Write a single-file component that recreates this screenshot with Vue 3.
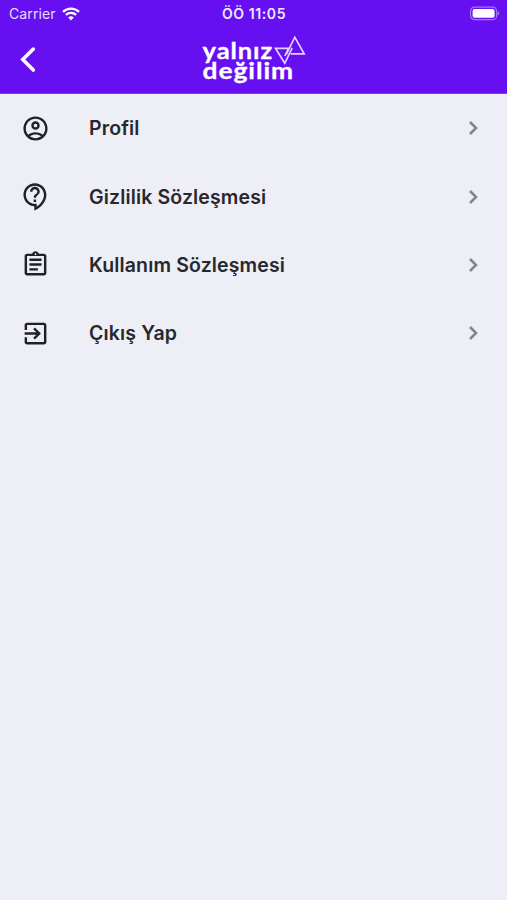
<template>
  <div class="screen">
    <header class="header">
      <div class="status-bar">
        <div class="carrier">
          <span>Carrier</span>
          <svg class="wifi" width="18" height="14" viewBox="0 0 18 14">
            <path d="M1 4.9a11.4 11.4 0 0 1 16 0" />
            <path d="M3.9 7.9a7.3 7.3 0 0 1 10.2 0" />
            <path class="wifi-dot" d="M9 13.4 6.2 10.6a4 4 0 0 1 5.6 0z" />
          </svg>
        </div>
        <div class="clock">ÖÖ 11:05</div>
        <svg class="battery" width="32" height="16" viewBox="0 0 32 16">
          <rect class="battery-frame" x="2.6" y="1.1" width="26" height="12.6" rx="4" />
          <rect x="4.6" y="3" width="22" height="8.8" rx="2" fill="#fff" />
          <path d="M29.8 5.3c1.6.5 1.6 3.7 0 4.2z" fill="#b58bf8" />
        </svg>
      </div>

      <div class="nav-bar">
        <button class="back" aria-label="Geri">
          <svg width="20" height="28" viewBox="0 0 20 28">
            <path d="M16.3 3.1 5.8 13.6l10.5 10.5" />
          </svg>
        </button>
        <svg class="logo" width="108" height="56" viewBox="0 0 108 56">
          <text x="2.6" y="26.8" textLength="70.5" lengthAdjust="spacingAndGlyphs">yalnız</text>
          <text x="2.6" y="47.4" textLength="91.5" lengthAdjust="spacingAndGlyphs">değilim</text>
          <path d="M86.3 22.3 94.8 5.2l9.4 16.6H90.8M92.2 15.8 84.8 31.3 75.5 16.4h13l-3.6 7.6" />
        </svg>
      </div>
    </header>

    <ul class="menu">
      <li v-for="item in items" :key="item.title" class="menu-item">
        <svg class="menu-icon" width="29" height="29" viewBox="0 0 24 24">
          <path :d="item.icon" />
        </svg>
        <span class="menu-title">{{ item.title }}</span>
        <svg class="chevron" width="12" height="16" viewBox="0 0 12 16">
          <path d="m2 2 6 6-6 6" />
        </svg>
      </li>
    </ul>
  </div>
</template>

<script setup>
const items = [
  {
    title: 'Profil',
    icon: 'M12 2C6.48 2 2 6.48 2 12s4.48 10 10 10 10-4.48 10-10S17.52 2 12 2zM7.35 18.5C8.66 17.56 10.26 17 12 17s3.34.56 4.65 1.5C15.34 19.44 13.74 20 12 20s-3.34-.56-4.65-1.5zm10.79-1.38C16.45 15.8 14.32 15 12 15s-4.45.8-6.14 2.12C4.7 15.73 4 13.95 4 12c0-4.42 3.58-8 8-8s8 3.58 8 8c0 1.95-.7 3.73-1.86 5.12zM12 6c-1.93 0-3.5 1.57-3.5 3.5S10.07 13 12 13s3.5-1.57 3.5-3.5S13.93 6 12 6zm0 5c-.83 0-1.5-.67-1.5-1.5S11.17 8 12 8s1.5.67 1.5 1.5S12.83 11 12 11z'
  },
  {
    title: 'Gizlilik Sözleşmesi',
    icon: 'M11 23.59v-3.6c-5.01-.26-9-4.42-9-9.49C2 5.26 6.26 1 11.5 1S21 5.26 21 10.5c0 4.95-3.44 9.93-8.57 12.4l-1.43.69zM11.5 3C7.36 3 4 6.36 4 10.5S7.36 18 11.5 18H13v2.3c3.64-2.3 6-6.08 6-9.8C19 6.36 15.64 3 11.5 3zm-1 11.5h2v2h-2zm2-1.5h-2c0-3.25 3-3 3-5 0-1.1-.9-2-2-2s-2 .9-2 2h-2c0-2.21 1.79-4 4-4s4 1.79 4 4c0 2.5-3 2.75-3 5z'
  },
  {
    title: 'Kullanım Sözleşmesi',
    icon: 'M7 15h7v2H7zm0-4h10v2H7zm0-4h10v2H7zm12-4h-4.18C14.4 1.84 13.3 1 12 1s-2.4.84-2.82 2H5c-1.1 0-2 .9-2 2v14c0 1.1.9 2 2 2h14c1.1 0 2-.9 2-2V5c0-1.1-.9-2-2-2zm-7-.25c.41 0 .75.34.75.75s-.34.75-.75.75-.75-.34-.75-.75.34-.75.75-.75zM19 19H5V5h14v14z'
  },
  {
    title: 'Çıkış Yap',
    icon: 'M10.09 15.59 11.5 17l5-5-5-5-1.41 1.41L12.67 11H3v2h9.67l-2.58 2.59zM19 3H5c-1.11 0-2 .9-2 2v4h2V5h14v14H5v-4H3v4c0 1.1.89 2 2 2h14c1.1 0 2-.9 2-2V5c0-1.1-.9-2-2-2z'
  }
]
</script>

<style>
body {
  background: #edeef6;
}
</style>

<style scoped>
.screen {
  min-height: 900px;
  background: #edeef6;
  font-family: Inter, "Liberation Sans", sans-serif;
}

.header {
  box-sizing: border-box;
  height: 94px;
  color: #fff;
  background: #6610f2;
  border-bottom: 1px solid #7d3bef;
}

.status-bar {
  display: grid;
  grid-template-columns: 1fr auto 1fr;
  align-items: center;
  height: 27px;
  padding: 0 7px 0 9px;
}

.carrier {
  display: flex;
  align-items: center;
  gap: 6px;
  font-size: 14px;
  letter-spacing: 0.1px;
  color: #e9dcff;
}

.wifi {
  fill: none;
  stroke: #fff;
  stroke-width: 2.2;
}

.wifi .wifi-dot {
  fill: #fff;
  stroke: none;
}

.clock {
  margin-left: -1px;
  font-size: 14px;
  font-weight: 600;
  letter-spacing: 0.6px;
  color: #f0e7ff;
}

.battery {
  justify-self: end;
}

.battery-frame {
  fill: none;
  stroke: #a576f7;
  stroke-width: 1.2;
}

.nav-bar {
  display: grid;
  grid-template-columns: 1fr auto 1fr;
  align-items: center;
  height: 66px;
  padding: 0 17px;
}

.back {
  justify-self: start;
  display: flex;
  padding: 0;
  border: 0;
  background: none;
}

.back path {
  fill: none;
  stroke: #fff;
  stroke-width: 3.6;
  stroke-linecap: round;
}

.logo text {
  font-family: Lato, sans-serif;
  font-size: 22.5px;
  font-weight: 700;
  letter-spacing: 0.8px;
  fill: #fff;
  stroke: #fff;
  stroke-width: 0.3;
}

.logo path {
  fill: none;
  stroke: #e3d2ff;
  stroke-width: 1.7;
}

.menu {
  margin: 0;
  padding: 0;
  list-style: none;
}

.menu-item {
  display: flex;
  align-items: center;
  height: 68.4px;
  padding: 0 27.5px 0 20.5px;
}

.menu-icon {
  fill: #202126;
}

.menu-title {
  flex: 1;
  margin-left: 39.5px;
  font-size: 19.5px;
  font-weight: 600;
  letter-spacing: 0.14px;
  color: #27282d;
}

.chevron path {
  fill: none;
  stroke: #85868b;
  stroke-width: 2.6;
}
</style>
